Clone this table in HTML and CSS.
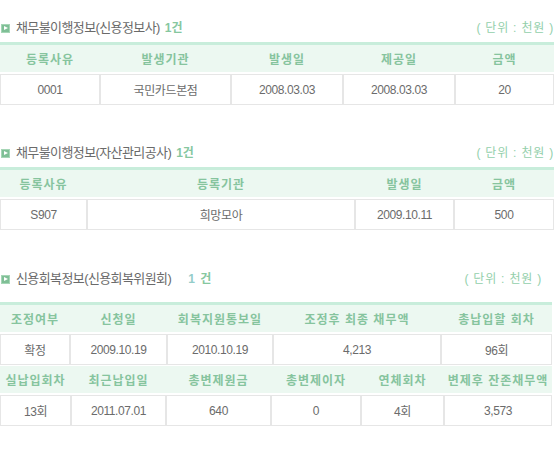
FILE: index.html
```html
<!DOCTYPE html>
<html lang="ko">
<head>
<meta charset="utf-8">
<title>신용정보</title>
<link rel="stylesheet" href="styles.css">
</head>
<body>
<div class="page">
  <section class="sec sec-1">
    <div class="sec-head">
      <h3 class="sec-title"><span class="ico"></span>채무불이행정보(신용정보사) <span class="cnt">1건</span></h3>
      <span class="unit">( 단위 : 천원 )</span>
    </div>
    <table class="grid t1">
      <colgroup><col><col><col><col><col></colgroup>
      <thead><tr><th>등록사유</th><th>발생기관</th><th>발생일</th><th>제공일</th><th>금액</th></tr></thead>
      <tbody><tr><td>0001</td><td>국민카드본점</td><td>2008.03.03</td><td>2008.03.03</td><td>20</td></tr></tbody>
    </table>
  </section>

  <section class="sec sec-2">
    <div class="sec-head">
      <h3 class="sec-title"><span class="ico"></span>채무불이행정보(자산관리공사) <span class="cnt">1건</span></h3>
      <span class="unit">( 단위 : 천원 )</span>
    </div>
    <table class="grid t2">
      <colgroup><col><col><col><col></colgroup>
      <thead><tr><th>등록사유</th><th>등록기관</th><th>발생일</th><th>금액</th></tr></thead>
      <tbody><tr><td>S907</td><td>희망모아</td><td>2009.10.11</td><td>500</td></tr></tbody>
    </table>
  </section>

  <section class="sec sec-3">
    <div class="sec-head">
      <h3 class="sec-title"><span class="ico"></span>신용회복정보(신용회복위원회) <span class="cnt cnt-wide"><span class="num">1</span> 건</span></h3>
      <span class="unit">( 단위 : 천원 )</span>
    </div>
    <table class="grid t3a">
      <colgroup><col><col><col><col><col></colgroup>
      <thead><tr><th>조정여부</th><th>신청일</th><th>회복지원통보일</th><th>조정후 최종 채무액</th><th>총납입할 회차</th></tr></thead>
      <tbody><tr><td>확정</td><td>2009.10.19</td><td>2010.10.19</td><td>4,213</td><td>96회</td></tr></tbody>
    </table>
    <table class="grid t3b">
      <colgroup><col><col><col><col><col><col></colgroup>
      <thead><tr><th>실납입회차</th><th>최근납입일</th><th>총변제원금</th><th>총변제이자</th><th>연체회차</th><th>변제후 잔존채무액</th></tr></thead>
      <tbody><tr><td>13회</td><td>2011.07.01</td><td>640</td><td>0</td><td>4회</td><td>3,573</td></tr></tbody>
    </table>
  </section>
</div>
</body>
</html>
```

FILE: styles.css
```css
html, body {
  margin: 0;
  padding: 0;
  background: #ffffff;
}

body {
  font-family: "Liberation Sans", "Noto Sans CJK KR", sans-serif;
  font-size: 12px;
  color: #666666;
}

.page {
  width: 554px;
  padding-top: 20px;
}

.sec-2 { margin-top: 40px; }
.sec-3 { margin-top: 41px; }

.sec-head {
  display: flex;
  align-items: center;
  justify-content: space-between;
  height: 16px;
  margin-bottom: 6px;
}

.sec-3 .sec-head {
  margin-bottom: 15px;
  width: 542px;
}

.sec-title {
  margin: 0;
  display: flex;
  align-items: center;
  font-size: 13px;
  font-weight: normal;
  line-height: 16px;
  color: #6a6a6a;
  letter-spacing: -0.6px;
  white-space: pre;
}

.ico {
  position: relative;
  display: inline-block;
  width: 9px;
  height: 9px;
  margin: 0 6px 0 1px;
  background: #7fbf96;
  box-shadow: inset 0 0 0 1px #a6d6b6;
}

.ico::after {
  content: "";
  position: absolute;
  left: 3px;
  top: 2px;
  border-left: 4px solid #ffffff;
  border-top: 2.5px solid transparent;
  border-bottom: 2.5px solid transparent;
}

.cnt {
  margin-left: 2px;
  color: #86c79f;
  font-weight: bold;
  font-size: 12px;
  letter-spacing: 0;
}

.cnt-wide {
  margin-left: 14px;
  letter-spacing: 1px;
}

.cnt .num {
  color: #94cdc9;
}

.unit {
  color: #93cfab;
  font-size: 12px;
  line-height: 16px;
  letter-spacing: 0.8px;
  white-space: pre;
}

.grid {
  border-collapse: separate;
  border-spacing: 0;
  table-layout: fixed;
  width: 554px;
  border-top: 3px solid #c8eddb;
}

.grid th {
  height: 27px;
  padding: 0;
  background: #ecf8f1;
  border-bottom: 2px solid #ffffff;
  color: #86c49e;
  font-weight: bold;
  font-size: 12px;
  letter-spacing: 1px;
  text-align: center;
  white-space: nowrap;
  box-sizing: border-box;
}

.grid td {
  height: 31px;
  padding: 0;
  border: 1px solid #e6e6e6;
  text-align: center;
  color: #6b6b6b;
  letter-spacing: -0.4px;
  white-space: nowrap;
  box-sizing: border-box;
}

.grid thead th { height: 29px; }

.t1 col:nth-child(1) { width: 100px; }
.t1 col:nth-child(2) { width: 131px; }
.t1 col:nth-child(3) { width: 112px; }
.t1 col:nth-child(4) { width: 112px; }
.t1 col:nth-child(5) { width: 99px; }

.t2 col:nth-child(1) { width: 87px; }
.t2 col:nth-child(2) { width: 268px; }
.t2 col:nth-child(3) { width: 99px; }
.t2 col:nth-child(4) { width: 100px; }

.t3a, .t3b { width: 552px; }

.t3a col:nth-child(1) { width: 70px; }
.t3a col:nth-child(2) { width: 97px; }
.t3a col:nth-child(3) { width: 106px; }
.t3a col:nth-child(4) { width: 168px; }
.t3a col:nth-child(5) { width: 111px; }

.t3b { border-top: 0; }
.t3b thead th {
  height: 30px;
  border-top: 1px solid #ffffff;
}

.t3b col:nth-child(1) { width: 71px; }
.t3b col:nth-child(2) { width: 95px; }
.t3b col:nth-child(3) { width: 105px; }
.t3b col:nth-child(4) { width: 90px; }
.t3b col:nth-child(5) { width: 83px; }
.t3b col:nth-child(6) { width: 108px; }
```
